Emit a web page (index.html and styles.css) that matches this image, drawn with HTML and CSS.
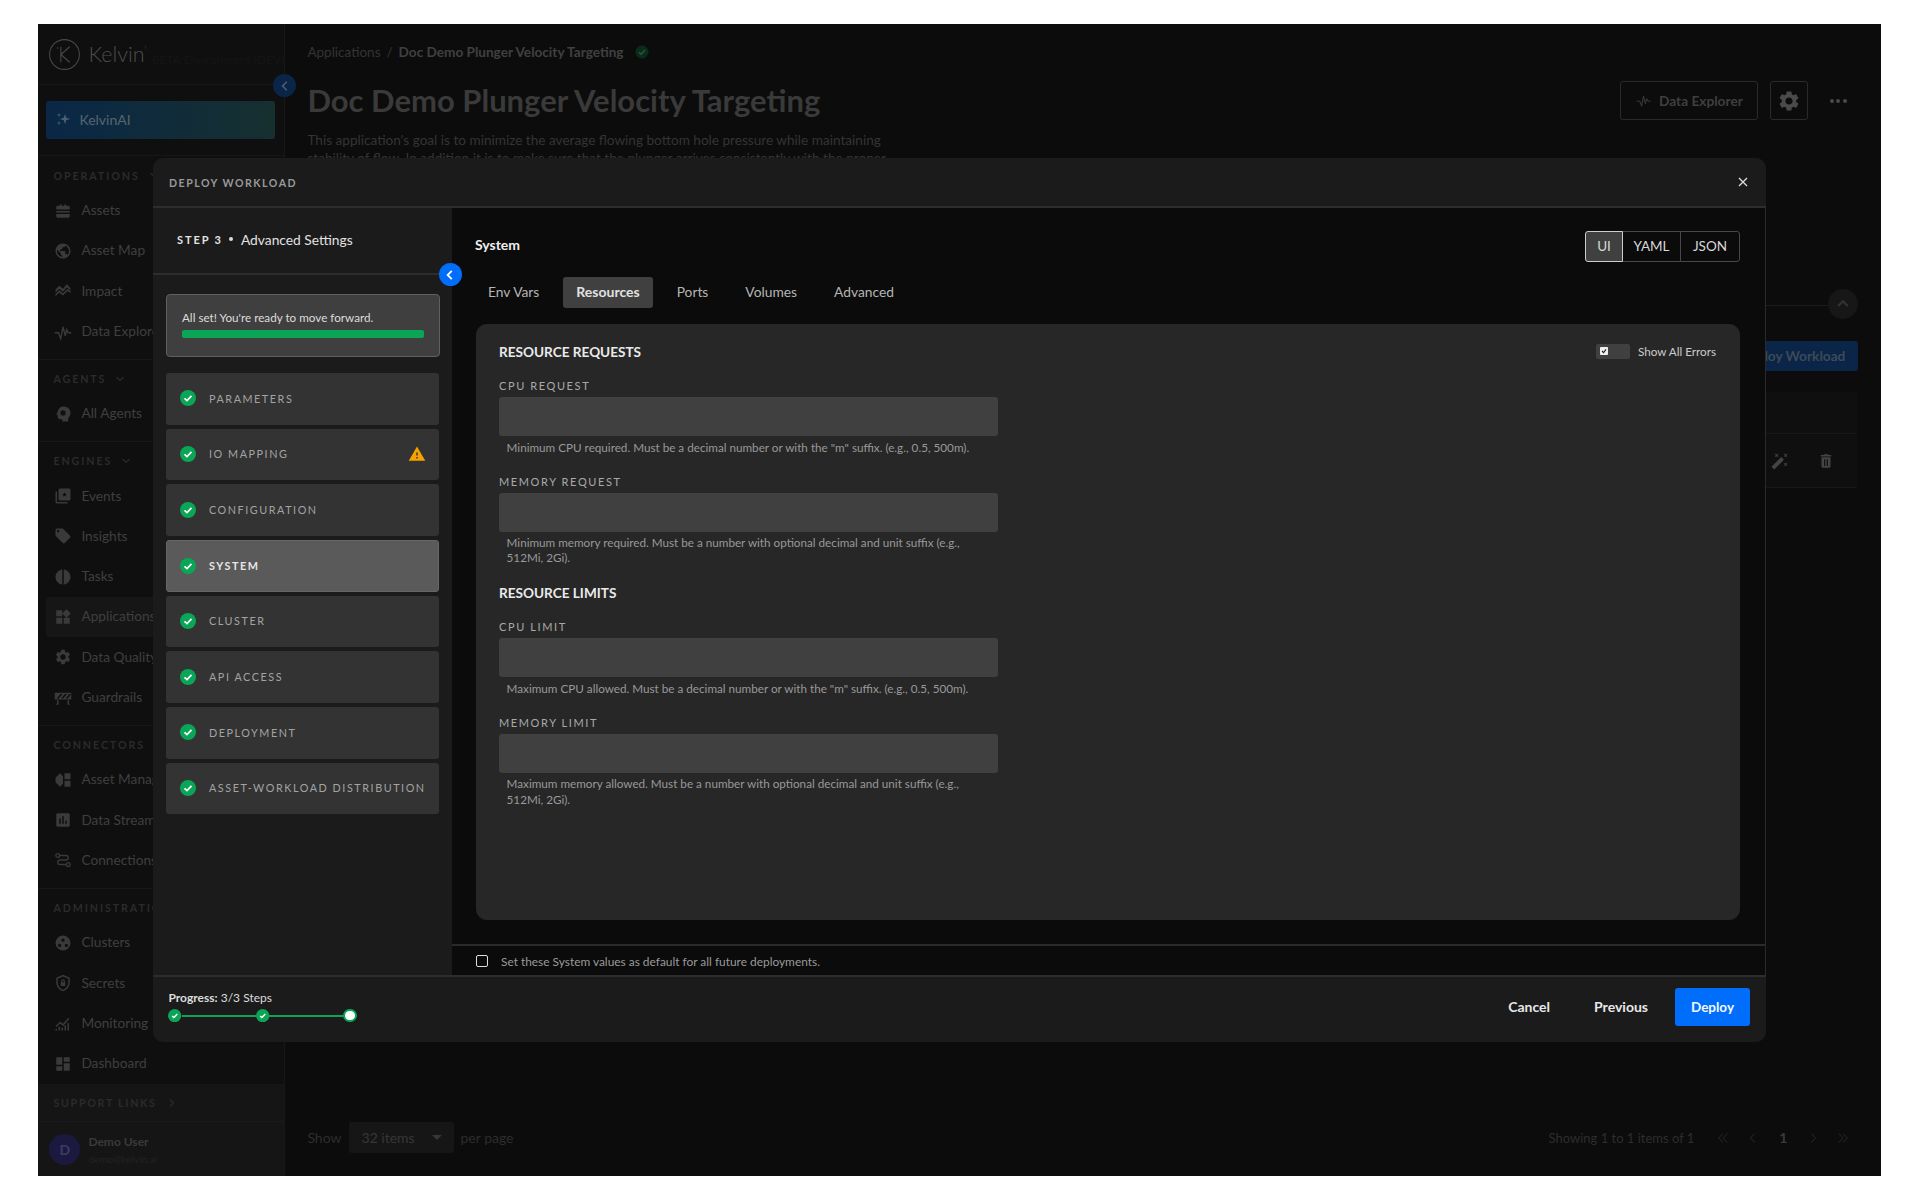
FILE: index.html
```html
<!DOCTYPE html>
<html lang="en">
<head>
<meta charset="utf-8">
<title>Doc Demo Plunger Velocity Targeting</title>
<link rel="stylesheet" href="styles.css">
</head>
<body>
<div class="app">
  <aside class="sidebar">
    <div class="side-head">
      <svg class="logo" viewBox="0 0 30 30"><circle cx="15" cy="15" r="14.4"/><path d="M11.5 7.5v15M20 7.5l-8.5 7.5 8.5 7.5M8.5 8v1.5"/></svg>
      <span class="brand">Kelvin<sup>'</sup></span>
      <span class="env">BETA Environment (DEV)</span>
      <span class="side-toggle"><svg viewBox="0 0 10 10"><polyline points="6.5,1.5 3,5 6.5,8.5"/></svg></span>
    </div>
    <div class="ai-wrap">
      <div class="ai-btn">
        <svg viewBox="0 0 24 24"><path d="M15 4l1.800 6.200L23 12l-6.200 1.800L15 20l-1.800-6.200L7 12l6.200-1.800zM6 3l.8 2.200L9 6l-2.200.8L6 9l-.8-2.200L3 6l2.200-.8zM6 15l.8 2.200L9 18l-2.200.8L6 21l-.8-2.200L3 18l2.200-.8z"/></svg>
        KelvinAI
      </div>
    </div>
    <nav class="side-nav">
      <section class="nav-group">
        <div class="nav-title">OPERATIONS <svg class="caret" viewBox="0 0 10 10"><polyline points="1.5,3 5,6.5 8.5,3"/></svg></div>
        <a class="nav-item"><svg viewBox="0 0 24 24"><path d="M8 3h2v2h4V3h2v2h3c1.100 0 2 .9 2 2v3H3V7c0-1.100.9-2 2-2h3zM3 12h18v2H3zM3 16h18v3c0 1.100-.9 2-2 2H5c-1.100 0-2-.9-2-2z"/></svg>Assets</a>
        <a class="nav-item"><svg viewBox="0 0 24 24"><path d="M12 2C6.480 2 2 6.480 2 12s4.480 10 10 10 10-4.480 10-10S17.520 2 12 2zm-1 17.930c-3.950-.49-7-3.850-7-7.930 0-.62.08-1.210.21-1.790L9 15v1c0 1.100.9 2 2 2v1.930zm6.900-2.540c-.26-.81-1-1.390-1.900-1.390h-1v-3c0-.55-.45-1-1-1H8v-2h2c.55 0 1-.45 1-1V7h2c1.100 0 2-.9 2-2v-.41c2.930 1.190 5 4.060 5 7.410 0 2.080-.8 3.970-2.100 5.390z"/></svg>Asset Map</a>
        <a class="nav-item"><svg viewBox="0 0 24 24"><path d="M2 21v-5l5-5 5 4 6-6 4 3v3l-4-3-6 6-5-4-5 5v2zM2 10l5-5 5 4 5-6 5 5v3l-5-4-5 6-5-4-5 5z"/></svg>Impact</a>
        <a class="nav-item"><svg class="line" viewBox="0 0 24 24"><polyline points="1,13 6,13 9,21 12,5 15,17 17,9 19,13 23,13"/></svg>Data Explorer</a>
      </section>
      <section class="nav-group">
        <div class="nav-title">AGENTS <svg class="caret" viewBox="0 0 10 10"><polyline points="1.5,3 5,6.5 8.5,3"/></svg></div>
        <a class="nav-item"><svg viewBox="0 0 24 24"><path d="M13 2c4.900 0 9 3.700 9 8.500 0 3-1.400 4.800-3 6.500v5h-8v-3H8c-1.700 0-3-1.300-3-3v-3H3l2-4.500C6 4.700 9 2 13 2zm-1 5a3.500 3.500 0 1 0 0 7 3.500 3.500 0 0 0 0-7z"/></svg>All Agents</a>
      </section>
      <section class="nav-group">
        <div class="nav-title">ENGINES <svg class="caret" viewBox="0 0 10 10"><polyline points="1.5,3 5,6.5 8.5,3"/></svg></div>
        <a class="nav-item"><svg viewBox="0 0 24 24"><path d="M2 6v14c0 1.100.9 2 2 2h14v-2H4V6H2zM20 2H8c-1.100 0-2 .9-2 2v12c0 1.100.9 2 2 2h12c1.100 0 2-.9 2-2V4c0-1.100-.9-2-2-2zm-4 11l-2-1.200-2 1.200.5-2.300-1.800-1.500 2.400-.2L14 7l.9 2 2.400.2-1.800 1.500z"/></svg>Events</a>
        <a class="nav-item"><svg viewBox="0 0 24 24"><path d="M21.410 11.580l-9-9C12.050 2.220 11.550 2 11 2H4c-1.100 0-2 .9-2 2v7c0 .55.22 1.050.59 1.420l9 9c.36.36.86.58 1.410.58.55 0 1.050-.22 1.410-.59l7-7c.37-.36.59-.86.59-1.410 0-.55-.23-1.060-.59-1.420zM5.500 7C4.670 7 4 6.330 4 5.500S4.670 4 5.500 4 7 4.670 7 5.500 6.330 7 5.500 7z"/></svg>Insights</a>
        <a class="nav-item"><svg viewBox="0 0 24 24"><path d="M11 2.100v19.800C6 21.400 2 17.100 2 12s4-9.400 9-9.900zM13 2.100c5 .5 9 4.800 9 9.900s-4 9.400-9 9.900z"/></svg>Tasks</a>
        <a class="nav-item nav-current"><svg viewBox="0 0 24 24"><path d="M13 13v8h8v-8h-8zM3 21h8v-8H3v8zM3 3v8h8V3H3zm13.660-1.310L11 7.340 16.660 13l5.660-5.660-5.660-5.650z"/></svg>Applications</a>
        <a class="nav-item"><svg viewBox="0 0 24 24"><path d="M19.140 12.940c.04-.3.06-.61.06-.94 0-.32-.02-.64-.07-.94l2.030-1.580c.18-.14.23-.41.12-.61l-1.920-3.320c-.12-.22-.37-.29-.59-.22l-2.390.96c-.5-.38-1.030-.7-1.620-.94l-.36-2.540c-.04-.24-.24-.41-.48-.41h-3.840c-.24 0-.43.17-.47.41l-.36 2.540c-.59.24-1.130.57-1.620.94l-2.390-.96c-.22-.08-.47 0-.59.22L2.740 8.870c-.12.21-.08.47.12.61l2.030 1.580c-.05.3-.09.63-.09.94s.02.64.07.94l-2.030 1.580c-.18.14-.23.41-.12.61l1.920 3.320c.12.22.37.29.59.22l2.390-.96c.5.38 1.030.7 1.620.94l.36 2.540c.05.24.24.41.48.41h3.840c.24 0 .44-.17.47-.41l.36-2.540c.59-.24 1.130-.56 1.620-.94l2.390.96c.22.08.47 0 .59-.22l1.920-3.320c.12-.22.07-.47-.12-.61l-2.010-1.580zM12 15.600c-1.980 0-3.600-1.620-3.600-3.600s1.620-3.600 3.600-3.600 3.600 1.620 3.600 3.600-1.620 3.600-3.600 3.600z"/></svg>Data Quality</a>
        <a class="nav-item"><svg viewBox="0 0 24 24"><path d="M1 5h22v9H1zM3.500 12.500h2.800l5-6H8.500zM9.500 12.500h2.800l5-6h-2.800zM15.500 12.500h2.800l4-5V6.500h-1.800zM4 15h2v6H3v-1.500h1zM18 15h2v4.500h1V21h-3z" fill-rule="evenodd"/></svg>Guardrails</a>
      </section>
      <section class="nav-group">
        <div class="nav-title">CONNECTORS</div>
        <a class="nav-item"><svg viewBox="0 0 24 24"><path d="M14 3h8v8h-8zM14 13h8v8h-8zM8 3l4 4v10l-4 4-6-6v-6z"/></svg>Asset Manager</a>
        <a class="nav-item"><svg viewBox="0 0 24 24"><path d="M19 3H5c-1.100 0-2 .9-2 2v14c0 1.100.9 2 2 2h14c1.100 0 2-.9 2-2V5c0-1.100-.9-2-2-2zM9 17H7v-7h2v7zm4 0h-2V7h2v10zm4 0h-2v-4h2v4z"/></svg>Data Streams</a>
        <a class="nav-item"><svg class="line" viewBox="0 0 24 24"><circle cx="5" cy="6" r="2.500"/><circle cx="19" cy="18" r="2.500"/><path d="M8 6h8c2 0 3 1.500 3 3s-1 3-3 3H8c-2 0-3 1.500-3 3s1 3 3 3h8"/></svg>Connections</a>
      </section>
      <section class="nav-group">
        <div class="nav-title">ADMINISTRATION</div>
        <a class="nav-item"><svg viewBox="0 0 24 24"><path d="M12 2a10 10 0 1 0 0 20 10 10 0 0 0 0-20zM12 6a2.200 2.200 0 1 1 0 4.400A2.200 2.200 0 0 1 12 6zM7.500 13a2.200 2.200 0 1 1 0 4.400 2.200 2.200 0 0 1 0-4.400zM16.500 13a2.200 2.200 0 1 1 0 4.400 2.200 2.200 0 0 1 0-4.400z" fill-rule="evenodd"/></svg>Clusters</a>
        <a class="nav-item"><svg viewBox="0 0 24 24"><path d="M12 1L3 5v6c0 5.500 3.800 10.700 9 12 5.200-1.300 9-6.500 9-12V5l-9-4zm0 2.200l7 3.100V11c0 4.500-3 8.700-7 9.900-4-1.200-7-5.400-7-9.900V6.300l7-3.100zM12 7a2.500 2.500 0 0 0-2.500 2.500V11H9v5h6v-5h-.5V9.500A2.500 2.500 0 0 0 12 7zm0 1.500c.6 0 1 .4 1 1V11h-2V9.500c0-.6.4-1 1-1z" fill-rule="evenodd"/></svg>Secrets</a>
        <a class="nav-item"><svg viewBox="0 0 24 24"><path d="M2 20h2v2H2zM6 17h2v5H6zM10 18h2v4h-2zM14 15h2v7h-2zM18 12h2v10h-2zM2 16l6-6 4 3 7-8 1.500 1.300L12.300 16 8 12.800 3.400 17.400z"/></svg>Monitoring</a>
        <a class="nav-item"><svg viewBox="0 0 24 24"><path d="M3 13h8V3H3v10zm0 8h8v-6H3v6zm10 0h8V11h-8v10zm0-18v6h8V3h-8z"/></svg>Dashboard</a>
      </section>
    </nav>
    <div class="support">SUPPORT LINKS <svg class="caret" viewBox="0 0 10 10"><polyline points="3,1.5 6.5,5 3,8.5"/></svg></div>
    <div class="user">
      <span class="avatar">D</span>
      <div>
        <div class="user-name">Demo User</div>
        <div class="user-mail">demo@kelvin.ai</div>
      </div>
    </div>
  </aside>

  <main class="main">
    <div class="crumbs">
      <span>Applications</span><span>/</span><b>Doc Demo Plunger Velocity Targeting</b>
      <svg viewBox="0 0 14 14"><circle cx="7" cy="7" r="6.5" fill="#0a2c1a"/><polyline points="4,7.2 6.2,9.3 10,5" fill="none" stroke="#2c5a3e" stroke-width="1.3"/></svg>
    </div>
    <div class="page-head">
      <h1>Doc Demo Plunger Velocity Targeting</h1>
      <div class="page-actions">
        <button class="ghost-btn"><svg viewBox="0 0 24 24"><polyline points="1,13 6,13 9,21 12,5 15,17 17,9 19,13 23,13"/></svg>Data Explorer</button>
        <button class="ghost-btn gear-btn"><svg viewBox="0 0 24 24"><path d="M19.140 12.940c.04-.3.06-.61.06-.94 0-.32-.02-.64-.07-.94l2.030-1.580c.18-.14.23-.41.12-.61l-1.920-3.320c-.12-.22-.37-.29-.59-.22l-2.390.96c-.5-.38-1.030-.7-1.620-.94l-.36-2.540c-.04-.24-.24-.41-.48-.41h-3.840c-.24 0-.43.17-.47.41l-.36 2.540c-.59.24-1.130.57-1.620.94l-2.390-.96c-.22-.08-.47 0-.59.22L2.740 8.870c-.12.21-.08.47.12.61l2.030 1.580c-.05.3-.09.63-.09.94s.02.64.07.94l-2.030 1.580c-.18.14-.23.41-.12.61l1.920 3.320c.12.22.37.29.59.22l2.390-.96c.5.38 1.030.7 1.620.94l.36 2.540c.05.24.24.41.48.41h3.840c.24 0 .44-.17.47-.41l.36-2.540c.59-.24 1.130-.56 1.620-.94l2.390.96c.22.08.47 0 .59-.22l1.920-3.320c.12-.22.07-.47-.12-.61l-2.010-1.580zM12 15.600c-1.980 0-3.600-1.620-3.600-3.600s1.620-3.600 3.600-3.600 3.600 1.620 3.600 3.600-1.620 3.600-3.600 3.600z"/></svg></button>
        <span class="dots"><i></i><i></i><i></i></span>
      </div>
    </div>
    <p class="page-desc">This application's goal is to minimize the average flowing bottom hole pressure while maintaining stability of flow. In addition it is to make sure that the plunger arrives consistently with the proper column</p>
    <div class="fold-row">
      <span class="fold-line"></span>
      <span class="fold-btn"><svg viewBox="0 0 10 10"><polyline points="1.5,6.5 5,3 8.5,6.5"/></svg></span>
    </div>
    <div class="deploy-row"><button class="dim-primary">Deploy Workload</button></div>
    <div class="table-wrap">
      <div class="table-head"></div>
      <div class="table-row">
        <svg viewBox="0 0 24 24"><path d="M7.500 5.600L10 7 8.600 4.500 10 2 7.500 3.400 5 2l1.400 2.500L5 7zm12 9.800L17 14l1.400 2.500L17 19l2.500-1.400L22 19l-1.400-2.500L22 14zM22 2l-2.500 1.400L17 2l1.400 2.500L17 7l2.500-1.400L22 7l-1.400-2.500zm-7.630 5.290c-.39-.39-1.020-.39-1.410 0L1.290 18.960c-.39.39-.39 1.020 0 1.410l2.340 2.340c.39.39 1.020.39 1.410 0L16.700 11.050c.39-.39.39-1.020 0-1.410l-2.330-2.350z"/></svg>
        <svg viewBox="0 0 24 24"><path d="M6 19c0 1.100.9 2 2 2h8c1.100 0 2-.9 2-2V7H6v12zM9.500 9.500h1.500v9H9.500zM13 9.500h1.500v9H13zM19 4h-3.500l-1-1h-5l-1 1H5v2h14V4z" fill-rule="evenodd"/></svg>
      </div>
    </div>
    <div class="pager">
      <span>Show</span>
      <span class="per-page">32 items<i class="arrow"></i></span>
      <span>per page</span>
      <span class="pager-info">Showing 1 to 1 items of 1</span>
      <span class="pager-links">
        <svg viewBox="0 0 14 14"><polyline points="7,2 2,7 7,12"/><polyline points="12,2 7,7 12,12"/></svg>
        <svg viewBox="0 0 14 14"><polyline points="9,2 4,7 9,12"/></svg>
        <b>1</b>
        <svg viewBox="0 0 14 14"><polyline points="5,2 10,7 5,12"/></svg>
        <svg viewBox="0 0 14 14"><polyline points="2,2 7,7 2,12"/><polyline points="7,2 12,7 7,12"/></svg>
      </span>
    </div>
  </main>

  <div class="modal">
    <header class="modal-head">
      <span class="modal-title">DEPLOY WORKLOAD</span>
      <svg class="modal-close" viewBox="0 0 10 10"><path d="M1 1l8 8M9 1l-8 8"/></svg>
    </header>
    <div class="modal-body">
      <div class="wizard">
        <div class="wizard-head"><b>STEP 3</b><i></i><span>Advanced Settings</span></div>
        <span class="wizard-toggle"><svg viewBox="0 0 10 10"><polyline points="6.5,1.5 3,5 6.5,8.5"/></svg></span>
        <div class="wizard-list">
          <div class="ready">
            <div class="ready-text">All set! You're ready to move forward.</div>
            <div class="ready-bar"></div>
          </div>
          <div class="steps">
            <div class="step"><svg class="ok" viewBox="0 0 16 16"><circle cx="8" cy="8" r="8"/><polyline points="4.5,8.3 7,10.6 11.5,5.8"/></svg>PARAMETERS</div>
            <div class="step"><svg class="ok" viewBox="0 0 16 16"><circle cx="8" cy="8" r="8"/><polyline points="4.5,8.3 7,10.6 11.5,5.8"/></svg>IO MAPPING<svg class="warn" viewBox="0 0 24 24"><path d="M1 21h22L12 2 1 21zm12-3h-2v-2h2v2zm0-4h-2v-4h2v4z"/></svg></div>
            <div class="step"><svg class="ok" viewBox="0 0 16 16"><circle cx="8" cy="8" r="8"/><polyline points="4.5,8.3 7,10.6 11.5,5.8"/></svg>CONFIGURATION</div>
            <div class="step step-on"><svg class="ok" viewBox="0 0 16 16"><circle cx="8" cy="8" r="8"/><polyline points="4.5,8.3 7,10.6 11.5,5.8"/></svg>SYSTEM</div>
            <div class="step"><svg class="ok" viewBox="0 0 16 16"><circle cx="8" cy="8" r="8"/><polyline points="4.5,8.3 7,10.6 11.5,5.8"/></svg>CLUSTER</div>
            <div class="step"><svg class="ok" viewBox="0 0 16 16"><circle cx="8" cy="8" r="8"/><polyline points="4.5,8.3 7,10.6 11.5,5.8"/></svg>API ACCESS</div>
            <div class="step"><svg class="ok" viewBox="0 0 16 16"><circle cx="8" cy="8" r="8"/><polyline points="4.5,8.3 7,10.6 11.5,5.8"/></svg>DEPLOYMENT</div>
            <div class="step"><svg class="ok" viewBox="0 0 16 16"><circle cx="8" cy="8" r="8"/><polyline points="4.5,8.3 7,10.6 11.5,5.8"/></svg>ASSET-WORKLOAD DISTRIBUTION</div>
          </div>
        </div>
      </div>
      <div class="content">
        <div class="content-main">
          <div class="content-top">
            <span class="content-title">System</span>
            <div class="seg">
              <span class="seg-on">UI</span><span class="seg-yaml">YAML</span><span class="seg-json">JSON</span>
            </div>
          </div>
          <div class="tabs">
            <span class="tab">Env Vars</span>
            <span class="tab tab-on">Resources</span>
            <span class="tab">Ports</span>
            <span class="tab">Volumes</span>
            <span class="tab">Advanced</span>
          </div>
          <div class="panel">
            <div class="panel-top">
              <h3>RESOURCE REQUESTS</h3>
              <label class="errors"><span class="switch"><svg viewBox="0 0 10 10"><rect width="10" height="10" rx="1"/><polyline points="2.5,5 4.5,7 7.5,3"/></svg></span>Show All Errors</label>
            </div>
            <div class="field">
              <label>CPU REQUEST</label>
              <div class="input"></div>
              <p>Minimum CPU required. Must be a decimal number or with the "m" suffix. (e.g., 0.5, 500m).</p>
            </div>
            <div class="field">
              <label>MEMORY REQUEST</label>
              <div class="input"></div>
              <p>Minimum memory required. Must be a number with optional decimal and unit suffix (e.g., 512Mi, 2Gi).</p>
            </div>
            <h3 class="panel-sub">RESOURCE LIMITS</h3>
            <div class="field">
              <label>CPU LIMIT</label>
              <div class="input"></div>
              <p>Maximum CPU allowed. Must be a decimal number or with the "m" suffix. (e.g., 0.5, 500m).</p>
            </div>
            <div class="field">
              <label>MEMORY LIMIT</label>
              <div class="input"></div>
              <p>Maximum memory allowed. Must be a number with optional decimal and unit suffix (e.g., 512Mi, 2Gi).</p>
            </div>
          </div>
        </div>
        <div class="defaults"><span class="box"></span>Set these System values as default for all future deployments.</div>
      </div>
    </div>
    <footer class="modal-foot">
      <div class="progress">
        <div class="progress-text"><b>Progress:</b> 3/3 Steps</div>
        <div class="track">
          <svg class="dot" viewBox="0 0 14 14"><circle cx="7" cy="7" r="7"/><polyline points="4.3,7.3 6.2,9 9.8,5.3"/></svg>
          <span class="track-line"></span>
          <svg class="dot" viewBox="0 0 14 14"><circle cx="7" cy="7" r="7"/><polyline points="4.3,7.3 6.2,9 9.8,5.3"/></svg>
          <span class="track-line"></span>
          <span class="dot-now"></span>
        </div>
      </div>
      <div class="foot-actions">
        <button class="text-btn">Cancel</button>
        <button class="text-btn">Previous</button>
        <button class="primary-btn">Deploy</button>
      </div>
    </footer>
  </div>
</div>
</body>
</html>
```

FILE: styles.css
```css
*{margin:0;padding:0;box-sizing:border-box;}
html,body{background:#fff;}
body{padding:24px 38.4px;font-family:"Lato","Liberation Sans",sans-serif;}
button{font-family:inherit;border:0;background:none;}
svg{display:block;flex:none;}

.app{
	position:relative;
	display:flex;
	width:1843px;
	height:1152px;
	background:#0c0c0c;
	overflow:hidden;
}

/* sidebar */
.sidebar{
	display:flex;
	flex-direction:column;
	width:247px;
	background:#0f0f0f;
	border-right:1px solid #171717;
	position:relative;
}
.side-head{
	position:relative;
	display:flex;
	align-items:center;
	height:62px;
	padding-left:11px;
	border-bottom:1px solid #171717;
}
.logo{width:31px;height:31px;fill:none;stroke:#4a4a4a;stroke-width:1;}
.brand{margin-left:8px;font-size:21.5px;font-weight:300;color:#4d4d4d;}
.brand sup{font-size:11px;line-height:0;}
.env{margin:11px 0 0 5px;font-size:12px;color:#151515;white-space:nowrap;}
.side-toggle{
	position:absolute;
	right:-12px;
	top:50px;
	width:23px;
	height:23px;
	border-radius:50%;
	background:#0a2547;
	display:flex;
	align-items:center;
	justify-content:center;
	z-index:2;
}
.side-toggle svg{width:12px;height:12px;fill:none;stroke:#4d5f78;stroke-width:1.3;}
.ai-wrap{padding:16px 9px 16px 8px;border-bottom:1px solid #171717;}
.ai-btn{
	display:flex;
	align-items:center;
	gap:8px;
	height:38px;
	padding:0 0 2px 9px;
	border-radius:3px;
	background:linear-gradient(90deg,#0a2747,#16302f);
	font-size:14px;
	color:#566570;
}
.ai-btn svg{width:16px;height:16px;fill:#4d5f70;}
.side-nav{flex:1;}
.nav-group{padding:1px 0 7px;border-bottom:1px solid #171717;}
.nav-group:last-child{border-bottom:0;padding-bottom:0;}
.nav-title{
	display:flex;
	align-items:center;
	gap:9px;
	height:33px;
	padding:3px 0 0 15px;
	font-size:10.7px;
	font-weight:700;
	letter-spacing:1.9px;
	color:#2b2b2b;
	white-space:nowrap;
}
.caret{width:10px;height:10px;fill:none;stroke:#2b2b2b;stroke-width:1.2;}
.nav-item{
	display:flex;
	align-items:center;
	gap:9.5px;
	height:40.3px;
	padding:0 0 2px 15.5px;
	font-size:13.7px;
	color:#3f3f3f;
	white-space:nowrap;
}
.nav-item svg{width:18px;height:18px;margin-top:2px;fill:#3a3a3a;}
.nav-item svg.line{fill:none;stroke:#3a3a3a;stroke-width:1.8;}
.nav-current{margin:0 8px;padding-left:7.5px;background:#161616;border-radius:3px;}
.support{
	display:flex;
	align-items:center;
	gap:10px;
	height:39px;
	padding-left:15px;
	background:#151515;
	border-bottom:1px solid #1a1a1a;
	font-size:10.7px;
	font-weight:700;
	letter-spacing:1.7px;
	color:#2b2b2b;
}
.user{
	display:flex;
	align-items:center;
	gap:8px;
	height:54px;
	padding-left:11px;
	background:#151515;
}
.avatar{
	display:flex;
	align-items:center;
	justify-content:center;
	width:31px;
	height:31px;
	border-radius:50%;
	background:#1b1940;
	font-size:14px;
	font-weight:700;
	color:#3d3b66;
}
.user-name{font-size:12px;font-weight:700;color:#3a3a3a;}
.user-mail{margin-top:4px;font-size:10px;color:#232323;}

/* page behind the dialog */
.main{
	flex:1;
	display:flex;
	flex-direction:column;
	padding:20px 23px 23px 22px;
	min-width:0;
}
.crumbs{
	display:flex;
	align-items:center;
	gap:6px;
	height:16px;
	font-size:13.5px;
	color:#343434;
}
.crumbs b{font-size:13.6px;color:#404040;font-weight:700;}
.crumbs svg{width:14px;height:14px;margin-left:5px;}
.page-head{
	display:flex;
	justify-content:space-between;
	align-items:center;
	height:39px;
	margin-top:21px;
}
.page-head h1{margin-top:-2px;font-size:31px;font-weight:700;color:#3a3a3a;}
.page-actions{display:flex;align-items:center;gap:12px;}
.ghost-btn{
	display:flex;
	align-items:center;
	justify-content:center;
	gap:8px;
	width:138px;
	height:39px;
	border:1px solid #2a2a2a;
	border-radius:3px;
	font-size:13.7px;
	font-weight:700;
	color:#3f3f3f;
}
.ghost-btn svg{width:15px;height:15px;fill:none;stroke:#3f3f3f;stroke-width:1.5;}
.gear-btn{width:38px;}
.gear-btn svg{width:24px;height:24px;fill:#4a4a4a;stroke:none;}
.dots{display:flex;gap:2.5px;margin:0 11.5px 0 9.5px;}
.dots i{width:4px;height:4px;border-radius:50%;background:#4a4a4a;}
.page-desc{
	width:622px;
	height:36px;
	margin-top:11px;
	font-size:13.6px;
	line-height:18px;
	color:#343434;
}
.fold-row{display:flex;align-items:center;margin-top:122px;}
.fold-line{flex:1;height:1px;margin-top:3px;background:#1c1c1c;}
.fold-btn{
	display:flex;
	align-items:center;
	justify-content:center;
	width:30px;
	height:30px;
	border-radius:50%;
	background:#171717;
}
.fold-btn svg{width:14px;height:14px;fill:none;stroke:#333;stroke-width:1.5;}
.deploy-row{display:flex;justify-content:flex-end;margin-top:22px;}
.dim-primary{
	height:30px;
	padding:0 13px 2px;
	border-radius:3px;
	background:#0a2547;
	font-size:13.7px;
	font-weight:700;
	color:#3e4a58;
}
.table-wrap{margin-top:21px;margin-right:1px;}
.table-head{height:42px;background:#0f0f0f;border-bottom:1px solid #181818;}
.table-row{
	display:flex;
	justify-content:flex-end;
	align-items:center;
	gap:28px;
	height:54px;
	padding-right:22px;
	background:#0f0f0f;
	border-bottom:1px solid #181818;
}
.table-row svg{width:18px;height:18px;fill:#444;}
.pager{
	display:flex;
	align-items:center;
	gap:7px;
	height:31px;
	margin-top:auto;
	font-size:14px;
	color:#2d2d2d;
}
.per-page{
	display:flex;
	align-items:center;
	justify-content:space-between;
	width:105px;
	height:31px;
	padding:0 10px 0 13px;
	border-radius:3px;
	background:#161616;
	color:#363636;
}
.arrow{border:5px solid transparent;border-top-color:#363636;border-bottom:0;margin-right:2px;}
.pager-info{margin-left:auto;font-size:13px;}
.pager-links{display:flex;align-items:center;gap:18px;margin:0 9px 0 16px;}
.pager-links svg{width:12px;height:12px;fill:none;stroke:#222;stroke-width:1.2;}
.pager-links b{width:12px;text-align:center;color:#3a3a3a;font-weight:700;}

/* dialog */
.modal{
	position:absolute;
	left:114.6px;
	top:134px;
	display:flex;
	flex-direction:column;
	width:1613px;
	height:884px;
	background:#1b1b1b;
	border-radius:10px;
	overflow:hidden;
	z-index:5;
}
.modal-head{
	display:flex;
	align-items:center;
	justify-content:space-between;
	flex:none;
	height:50px;
	padding:0 18px 0 16px;
	border-bottom:2px solid #2d2d2d;
}
.modal-title{margin-top:1px;font-size:10.6px;font-weight:700;letter-spacing:1.5px;color:#999;}
.modal-close{width:10px;height:10px;fill:none;stroke:#ddd;stroke-width:1.3;}
.modal-body{flex:1;display:flex;min-height:0;}
.wizard{position:relative;flex:none;width:299px;}
.wizard-head{
	display:flex;
	align-items:center;
	height:67px;
	padding:0 0 3px 24px;
	border-bottom:2px solid #2d2d2d;
	color:#e2e2e2;
}
.wizard-head b{font-size:11px;letter-spacing:1.9px;font-weight:700;}
.wizard-head i{width:4px;height:4px;margin:0 8px 0 6px;border-radius:50%;background:#ddd;}
.wizard-head span{font-size:13.8px;}
.wizard-toggle{
	position:absolute;
	right:-10px;
	top:55px;
	display:flex;
	align-items:center;
	justify-content:center;
	width:23px;
	height:23px;
	border-radius:50%;
	background:#006efa;
	z-index:2;
}
.wizard-toggle svg{width:12px;height:12px;fill:none;stroke:#fff;stroke-width:1.5;}
.wizard-list{padding:19px 12px 0 13px;}
.ready{
	height:63px;
	padding:16px 15px 0;
	border:1px solid #606060;
	border-radius:4px;
	background:#3f3f3f;
}
.ready-text{margin-top:-1px;margin-bottom:1px;font-size:11.7px;line-height:14px;color:#ddd;}
.ready-bar{height:8px;margin-top:6px;border-radius:2px;background:#0aa556;}
.steps{display:flex;flex-direction:column;gap:4px;margin:16px 1px 0 0;}
.step{
	display:flex;
	align-items:center;
	height:51.67px;
	padding:0 14px 1px;
	border-radius:3px;
	background:#333;
	font-size:10.8px;
	letter-spacing:1.55px;
	color:#a3a3a3;
	white-space:nowrap;
}
.step-on{background:#5a5a5a;border:1px solid #666;font-weight:700;color:#e6e6e6;padding:0 13px;}
.ok{width:16px;height:16px;margin-right:13px;}
.ok circle{fill:#0aa556;}
.ok polyline{fill:none;stroke:#fff;stroke-width:1.7;}
.warn{width:18px;height:18px;margin-left:auto;margin-right:-1px;fill:#f5a300;}
.content{
	flex:1;
	display:flex;
	flex-direction:column;
	min-width:0;
	background:#0b0b0b;
	border-right:1px solid #2a2a2a;
}
.content-main{
	flex:1;
	padding:23px 25px 24px 23px;
	border-bottom:2px solid #2a2a2a;
}
.content-top{display:flex;justify-content:space-between;align-items:center;height:31px;}
.content-title{margin-top:-5px;font-size:14px;font-weight:700;color:#eee;}
.seg{display:flex;height:31px;font-size:13.5px;color:#d8d8d8;}
.seg span{
	display:flex;
	align-items:center;
	justify-content:center;
	padding-bottom:2px;
	border:1px solid #484848;
	margin-left:-1px;
}
.seg .seg-on{width:38px;margin-left:0;background:#404040;border-color:#ccc;border-radius:3px 0 0 3px;position:relative;}
.seg-yaml{width:59px;}
.seg-json{width:60px;border-radius:0 3px 3px 0;}
.tabs{display:flex;gap:11px;height:31px;margin:15px 0 16px 0;font-size:13.8px;color:#b5b5b5;}
.tab{display:flex;align-items:center;padding:0 13px 2px;border-radius:3px;}
.tab-on{background:#404040;font-size:14px;font-weight:700;color:#e2e2e2;}
.panel{
	height:596px;
	margin-left:1px;
	padding:20px 24px 0 23px;
	border-radius:11px;
	background:#272727;
}
.panel h3{font-size:13.6px;line-height:16px;font-weight:700;color:#eaeaea;}
.panel-top{display:flex;justify-content:space-between;align-items:center;height:16px;}
.errors{display:flex;align-items:center;gap:8px;margin-top:-2px;font-size:11.7px;color:#ccc;}
.switch{
	display:flex;
	align-items:center;
	width:34px;
	height:15px;
	padding-left:4px;
	border-radius:2px;
	background:#404040;
}
.switch svg{width:8px;height:8px;}
.switch rect{fill:#eee;}
.switch polyline{fill:none;stroke:#222;stroke-width:1.4;}
.field{margin-top:19px;width:499px;}
.field label{
	display:block;
	height:14px;
	font-size:11px;
	line-height:14px;
	letter-spacing:1.6px;
	color:#a9a9a9;
}
.input{height:39px;margin-top:4px;border-radius:3px;background:#404040;}
.field p{
	margin-top:3.5px;
	padding:0 0 .6px 7.6px;
	font-size:11.7px;
	line-height:15.4px;
	color:#999;
}
.panel-sub{margin-top:19px;}
.defaults{
	display:flex;
	align-items:center;
	gap:13px;
	flex:none;
	height:31px;
	padding:0 0 1px 24px;
	font-size:11.9px;
	color:#9a9a9a;
}
.box{width:12px;height:12px;margin-top:-1px;border:1.5px solid #ddd;border-radius:2px;}
.modal-foot{
	display:flex;
	justify-content:space-between;
	align-items:flex-start;
	flex:none;
	height:67px;
	padding:11px 16px 0 15.5px;
	border-top:2px solid #2d2d2d;
}
.progress{padding-top:2px;}
.progress-text{font-size:12px;line-height:16px;color:#ddd;}
.progress-text b{font-weight:700;}
.track{display:flex;align-items:center;width:188px;margin-top:3px;}
.dot{width:13.3px;height:13.3px;}
.dot circle{fill:#0aa556;}
.dot polyline{fill:none;stroke:#fff;stroke-width:1.5;}
.track-line{flex:1;height:2px;background:#0aa556;}
.dot-now{width:13.3px;height:13.3px;border:2px solid #0aa556;border-radius:50%;background:#fff;}
.foot-actions{display:flex;gap:10px;}
.text-btn,.primary-btn{height:38px;padding:0 17px 2px;border-radius:3px;font-size:14px;font-weight:700;color:#e8e8e8;}
.primary-btn{width:75px;padding:0 0 1px;background:#006efa;color:#f2f7ff;font-size:13.5px;}
```
